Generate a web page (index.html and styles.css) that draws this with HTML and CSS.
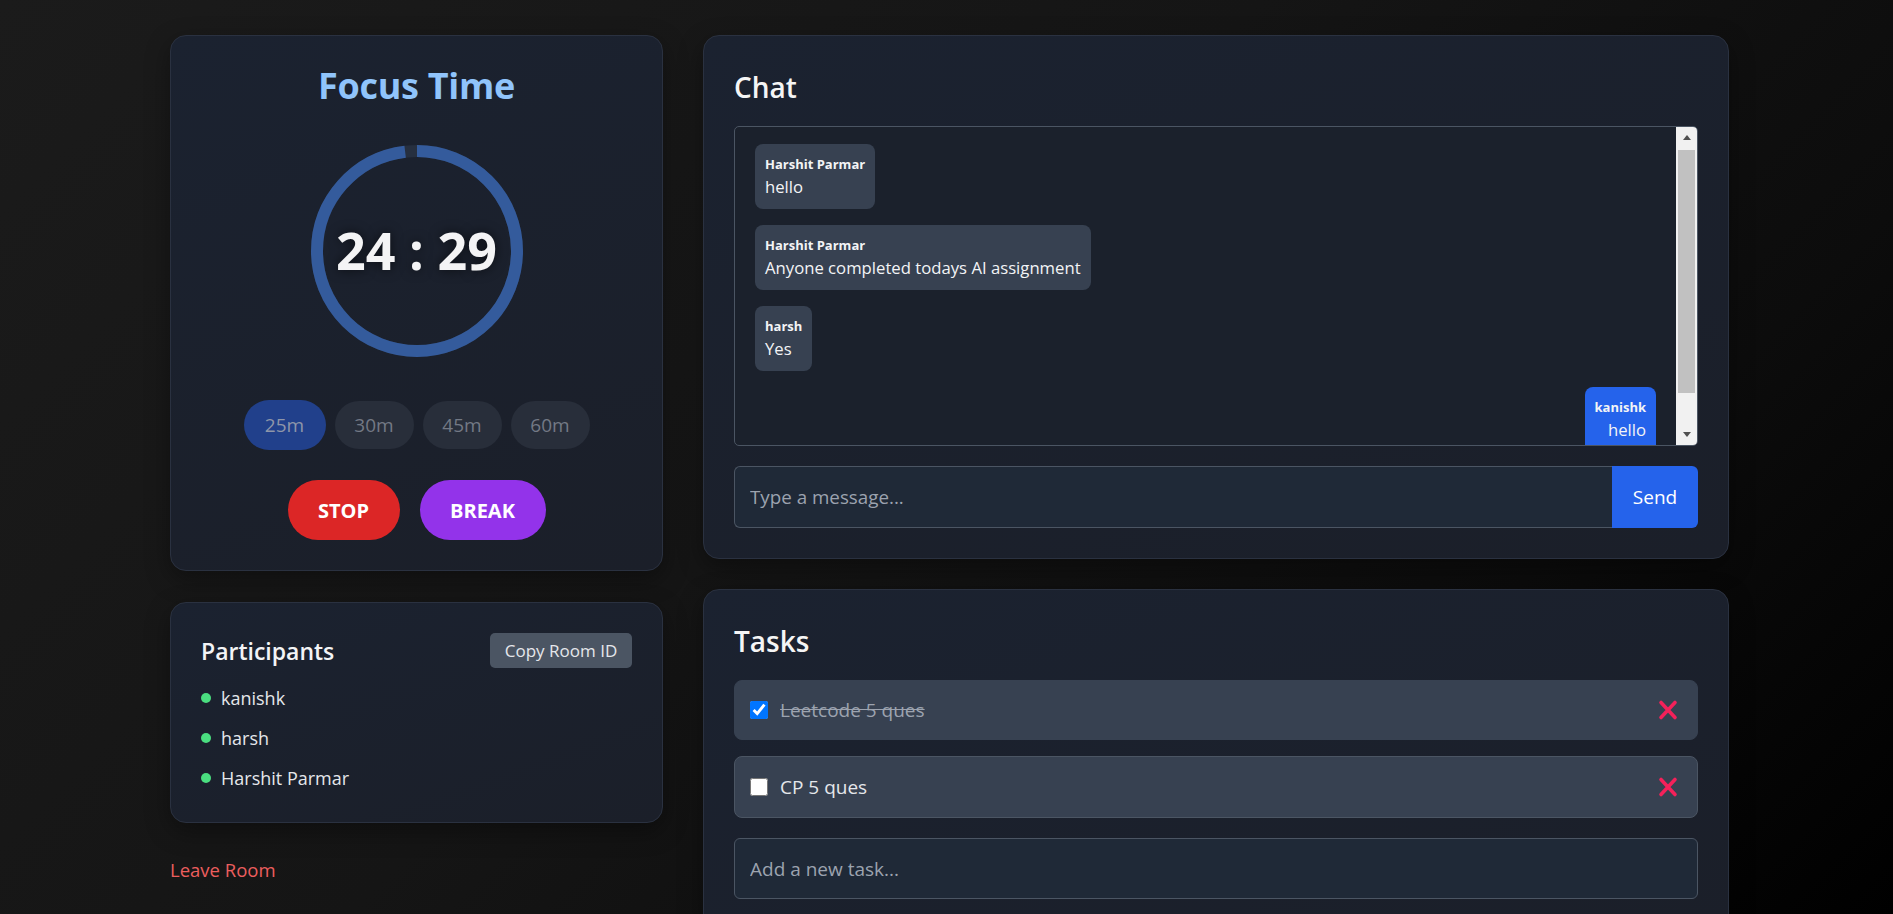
FILE: index.html
```html
<!DOCTYPE html>
<html lang="en">
<head>
<meta charset="utf-8">
<title>Study Room</title>
<link rel="stylesheet" href="styles.css">
</head>
<body>
<div class="layout">
  <div class="left-col">
    <section class="card timer-card">
      <h1 class="timer-title">Focus Time</h1>
      <div class="ring">
        <svg class="ring-svg" width="224" height="224" viewBox="0 0 224 224">
          <circle cx="112" cy="112" r="100" class="ring-track"/>
          <circle cx="112" cy="112" r="100" class="ring-progress" transform="rotate(-90 112 112)"/>
        </svg>
        <div class="ring-time">24 : 29</div>
      </div>
      <div class="durations">
        <button class="pill pill-active">25m</button>
        <button class="pill">30m</button>
        <button class="pill">45m</button>
        <button class="pill">60m</button>
      </div>
      <div class="controls">
        <button class="ctl ctl-stop">STOP</button>
        <button class="ctl ctl-break">BREAK</button>
      </div>
    </section>

    <section class="card participants-card">
      <div class="participants-head">
        <h2 class="participants-title">Participants</h2>
        <button class="copy-btn">Copy Room ID</button>
      </div>
      <ul class="people">
        <li class="person"><span class="dot"></span>kanishk</li>
        <li class="person"><span class="dot"></span>harsh</li>
        <li class="person"><span class="dot"></span>Harshit Parmar</li>
      </ul>
    </section>

    <a class="leave" href="#">Leave Room</a>
  </div>

  <div class="right-col">
    <section class="card chat-card">
      <h2 class="section-title">Chat</h2>
      <div class="chat-frame">
        <div class="chat-messages">
          <div class="msg">
            <div class="msg-name">Harshit Parmar</div>
            <div class="msg-text">hello</div>
          </div>
          <div class="msg">
            <div class="msg-name">Harshit Parmar</div>
            <div class="msg-text">Anyone completed todays AI assignment</div>
          </div>
          <div class="msg">
            <div class="msg-name">harsh</div>
            <div class="msg-text">Yes</div>
          </div>
          <div class="msg msg-own">
            <div class="msg-name">kanishk</div>
            <div class="msg-text">hello</div>
          </div>
        </div>
        <div class="scrollbar">
          <div class="sb-btn"><span class="sb-arrow sb-up"></span></div>
          <div class="sb-track"><div class="sb-thumb"></div></div>
          <div class="sb-btn"><span class="sb-arrow sb-down"></span></div>
        </div>
      </div>
      <div class="chat-input-row">
        <input class="chat-input" type="text" placeholder="Type a message...">
        <button class="send-btn">Send</button>
      </div>
    </section>

    <section class="card tasks-card">
      <h2 class="section-title">Tasks</h2>
      <div class="task-list">
        <div class="task">
          <input type="checkbox" class="task-check" checked>
          <span class="task-text task-done">Leetcode 5 ques</span>
          <svg class="task-del" width="22" height="22" viewBox="0 0 22 22"><path d="M4 3.5 L18 18.5 M18 3.5 L4 18.5" /></svg>
        </div>
        <div class="task task-bordered">
          <input type="checkbox" class="task-check">
          <span class="task-text">CP 5 ques</span>
          <svg class="task-del" width="22" height="22" viewBox="0 0 22 22"><path d="M4 3.5 L18 18.5 M18 3.5 L4 18.5" /></svg>
        </div>
      </div>
      <input class="task-input" type="text" placeholder="Add a new task...">
    </section>
  </div>
</div>
</body>
</html>
```

FILE: styles.css
```css
* { box-sizing: border-box; }
html, body { margin: 0; height: 914px; overflow: hidden; }
body {
  font-family: "Open Sans", "Noto Sans", sans-serif;
  background: linear-gradient(135deg, #1b1b1b 0%, #151515 45%, #0c0c0c 75%, #000 100%);
  color: #f3f4f6;
}
button, input { font-family: inherit; }

.layout {
  display: flex;
  gap: 40px;
  padding: 35px 0 0 170px;
}
.left-col { width: 493px; display: flex; flex-direction: column; }
.right-col { width: 1026px; display: flex; flex-direction: column; gap: 30px; }

.card {
  background: linear-gradient(160deg, #1b2230 0%, #1b1f29 100%);
  border: 1px solid #2a3140;
  border-radius: 16px;
  padding: 30px;
  box-shadow: 0 8px 24px rgba(0,0,0,0.35);
}

/* Timer */
.timer-card { display: flex; flex-direction: column; align-items: center; }
.timer-title {
  margin: 0 0 33px;
  font-size: 36px;
  line-height: 40px;
  font-weight: 700;
  color: #90c4fb;
  letter-spacing: -0.3px;
}
.ring { position: relative; width: 224px; height: 224px; }
.ring-svg { display: block; }
.ring-track { fill: none; stroke: #262f3f; stroke-width: 12; }
.ring-progress {
  fill: none; stroke: #345b9c; stroke-width: 12;
  stroke-dasharray: 628.3; stroke-dashoffset: 13;
}
.ring-time {
  position: absolute; inset: 0;
  display: flex; align-items: center; justify-content: center;
  font-size: 52px; font-weight: 700; color: #f4f4f5;
  text-shadow: 0 0 12px rgba(0,0,0,0.6);
  padding-bottom: 4px;
}
.durations { display: flex; gap: 9px; margin-top: 37px; align-items: center; }
.pill {
  width: 79px; height: 48px;
  border: none; border-radius: 24px;
  background: #282e3a; color: #737985;
  font-size: 19px;
  padding: 0;
}
.pill-active { width: 82px; height: 50px; border-radius: 25px; background: #21408b; color: #8e96a9; }
.controls { display: flex; gap: 20px; margin-top: 30px; }
.ctl {
  height: 60px; border: none; border-radius: 30px;
  color: #fff; font-weight: 700; font-size: 20px;
  padding: 0;
}
.ctl-stop { background: #dc2626; width: 112px; }
.ctl-break { background: #9333ea; width: 126px; }

/* Participants */
.participants-card { margin-top: 31px; }
.participants-head { display: flex; justify-content: space-between; align-items: center; }
.participants-title { margin: 0; font-size: 23px; font-weight: 600; line-height: 32px; color: #f3f4f6; }
.copy-btn {
  width: 142px; height: 35px;
  background: #4b5563; color: #e5e7eb;
  border: none; border-radius: 5px;
  font-size: 17px;
  padding: 0;
}
.people { list-style: none; margin: 16px 0 0; padding: 0; display: flex; flex-direction: column; gap: 12px; }
.person { display: flex; align-items: center; gap: 10px; font-size: 18px; line-height: 28px; color: #e5e7eb; }
.dot { width: 10px; height: 10px; border-radius: 50%; background: #4ade80; }

.leave {
  margin-top: 33px;
  color: #ec5e5e;
  font-size: 18.5px;
  line-height: 28px;
  text-decoration: none;
}

/* Chat */
.section-title { margin: 0 0 21px; padding-top: 3px; font-size: 28px; line-height: 36px; font-weight: 600; color: #f5f5f5; }
.chat-frame {
  display: flex;
  height: 320px;
  border: 1px solid #4b5563;
  border-radius: 5px;
  background: #1b212c;
  overflow: hidden;
}
.chat-messages {
  flex: 1;
  overflow: hidden;
  padding: 17px 20px 0;
  display: flex; flex-direction: column; gap: 16px; align-items: flex-start;
}
.scrollbar {
  width: 21px;
  background: #f1f1f1;
  display: flex; flex-direction: column;
}
.sb-btn { height: 21px; display: flex; align-items: center; justify-content: center; flex-shrink: 0; }
.sb-arrow { width: 0; height: 0; border-left: 4.5px solid transparent; border-right: 4.5px solid transparent; }
.sb-up { border-bottom: 5px solid #505050; }
.sb-down { border-top: 5px solid #505050; }
.sb-track { flex: 1; padding: 2px 2px 0; }
.sb-thumb { height: 243px; background: #c1c1c1; }

.msg {
  background: #374151;
  border-radius: 8px;
  padding: 10px;
  flex-shrink: 0;
}
.msg-name { font-size: 13px; font-weight: 700; line-height: 20px; color: #f3f4f6; }
.msg-text { font-size: 16.7px; line-height: 25px; color: #f3f4f6; }
.msg-own { align-self: flex-end; background: #2563eb; text-align: right; }

.chat-input-row { display: flex; margin-top: 20px; }
.chat-input {
  flex: 1; height: 62px;
  background: #1f2937; border: 1px solid #4b5563; border-right: none;
  border-radius: 6px 0 0 6px;
  padding: 0 15px;
  font-size: 18.8px; color: #e5e7eb;
  outline: none;
}
.chat-input::placeholder, .task-input::placeholder { color: #9ca3af; }
.send-btn {
  width: 86px; height: 62px;
  background: #2563eb; color: #fff; border: none;
  border-radius: 0 6px 6px 0;
  font-size: 19px;
  padding: 0;
}

/* Tasks */
.task-list { display: flex; flex-direction: column; gap: 16px; }
.task {
  display: flex; align-items: center; gap: 12px;
  height: 60px;
  background: #374151;
  border: 1px solid #374151;
  border-radius: 8px;
  padding: 0 18px 0 15px;
}
.task-bordered { height: 62px; border-color: #4b5563; }
.task-check { width: 18px; height: 18px; margin: 0; }
.task-text { flex: 1; font-size: 19px; color: #e5e7eb; }
.task-done { text-decoration: line-through; color: #9ca3af; }
.task-del { stroke: #f4215a; stroke-width: 3.6; stroke-linecap: round; fill: none; }
.task-input {
  display: block; width: 100%;
  margin-top: 20px; height: 61px;
  background: #1f2937; border: 1px solid #4b5563; border-radius: 6px;
  padding: 0 15px;
  font-size: 19px; color: #e5e7eb; outline: none;
}
```
